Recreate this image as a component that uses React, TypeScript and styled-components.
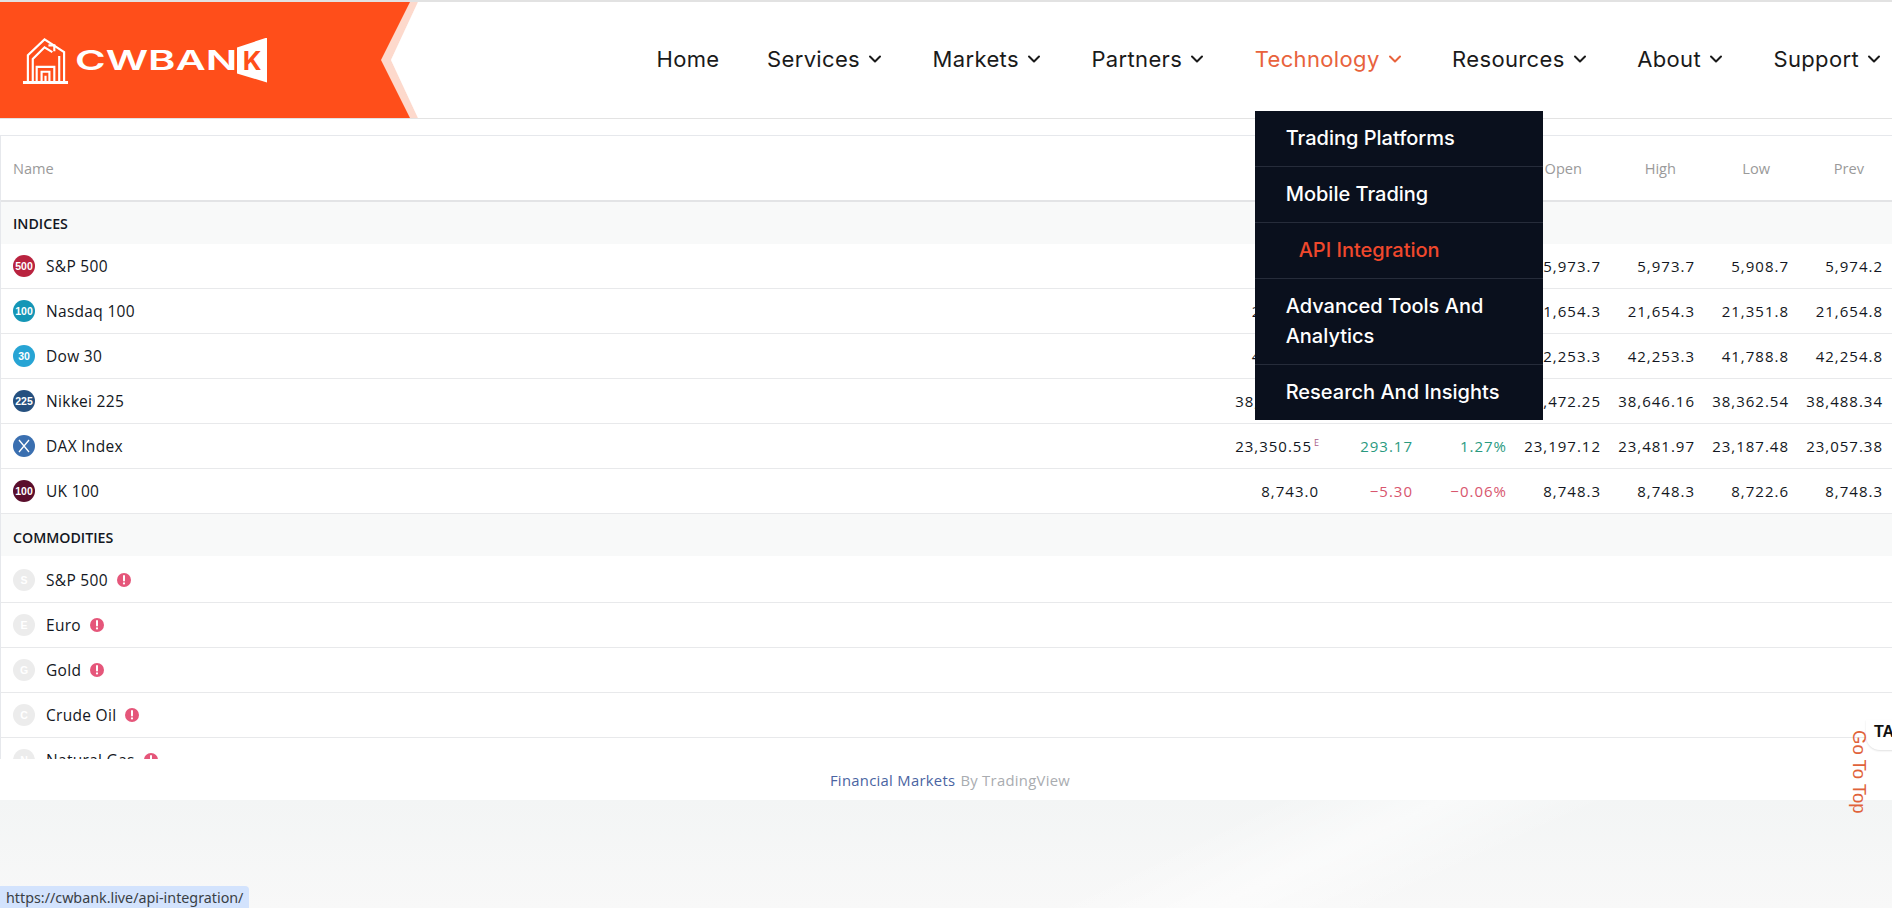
import React from 'react';
import styled, { createGlobalStyle } from 'styled-components';
import { ChevronDown } from 'lucide-react';

const GlobalStyle = createGlobalStyle`
	* {
		box-sizing: border-box;
	}
	html, body {
		margin: 0;
		padding: 0;
		background: #fff;
		overflow: hidden;
	}
`;

const Page = styled.div`
	position: relative;
	display: flex;
	flex-direction: column;
	height: 908px;
	overflow: hidden;
	background: #fff;
	font-family: 'Open Sans', 'Noto Sans', sans-serif;
`;

const Header = styled.header`
	display: flex;
	align-items: stretch;
	height: 119px;
	background: #fff;
	border-top: 2px solid #e2e2e2;
	border-bottom: 1px solid #e3e3e3;
`;

const Brand = styled.a`
	position: relative;
	display: flex;
	align-items: center;
	width: 418px;
	padding-left: 22px;
	background: #fdd9cc;
	clip-path: polygon(0 0, 100% 0, 391px 50%, 100% 100%, 0 100%);
	&::before {
		content: '';
		position: absolute;
		inset: 0;
		background: #ff4e1a;
		clip-path: polygon(0 0, 410px 0, 381px 50%, 410px 100%, 0 100%);
	}
	&::after {
		content: '';
		position: absolute;
		inset: 0;
		background: #fff;
		clip-path: polygon(100% 0, 418px 0, 391px 50%, 418px 100%, 100% 100%);
	}
`;

const BrandMark = styled.svg`
	position: relative;
	z-index: 1;
	flex: none;
	width: 47px;
	height: 48px;
	margin-top: 2px;
`;

const BrandWord = styled.span`
	position: relative;
	z-index: 1;
	display: block;
	width: 105px;
	margin-left: 6px;
	font-family: 'Inter', sans-serif;
	font-size: 27px;
	font-weight: 600;
	line-height: 1;
	color: #fff;
	transform: scaleX(1.54);
	transform-origin: left center;
`;

const BrandFlag = styled.span`
	position: relative;
	z-index: 1;
	display: flex;
	align-items: center;
	justify-content: center;
	width: 30px;
	height: 45px;
	margin-left: 57px;
	background: #fff;
	clip-path: polygon(0 22%, 100% 0, 100% 100%, 0 80%);
	font-family: 'Inter', sans-serif;
	font-size: 26px;
	font-weight: 700;
	color: #ff4e1a;
`;

const Nav = styled.nav`
	display: flex;
	align-items: center;
	margin-left: auto;
	padding-right: 8px;
	gap: 47.5px;
`;

const NavItem = styled.a<{ $active?: boolean }>`
	position: relative;
	display: flex;
	align-items: center;
	gap: 5px;
	height: 100%;
	padding-bottom: 2px;
	font-family: 'Inter', sans-serif;
	font-size: 22px;
	letter-spacing: 0.35px;
	color: ${(p) => (p.$active ? '#e8623c' : '#1a1a1a')};
`;

const Dropdown = styled.ul`
	position: absolute;
	top: 109px;
	left: 0;
	z-index: 5;
	width: 288px;
	margin: 0;
	padding: 0;
	list-style: none;
	background: #0a101d;
`;

const DropdownItem = styled.li<{ $current?: boolean }>`
	padding: 12px 20px 13px ${(p) => (p.$current ? '44px' : '31px')};
	border-top: 1px solid #262c3a;
	font-family: 'Inter', sans-serif;
	font-size: 20px;
	font-weight: 500;
	line-height: 30px;
	letter-spacing: 0;
	color: ${(p) => (p.$current ? '#f0482c' : '#fff')};
	&:first-child {
		border-top: 0;
	}
`;

const Market = styled.section`
	height: 624px;
	margin-top: 16px;
	background: #fff;
	border-top: 1px solid #e6e8ec;
	border-left: 1px solid #e6e8ec;
	overflow: hidden;
	color: #131722;
`;

const columns = '1fr repeat(7, 94px)';

const HeadRow = styled.div`
	display: grid;
	grid-template-columns: ${columns};
	align-items: center;
	height: 66px;
	padding-right: 9px;
	border-bottom: 2px solid #e3e4e6;
	font-size: 14.6px;
	color: #9a9a9a;
`;

const HeadCell = styled.span<{ $name?: boolean }>`
	text-align: ${(p) => (p.$name ? 'left' : 'right')};
	padding: ${(p) => (p.$name ? '0 0 0 12px' : '0 19px 0 0')};
`;

const SectionTitle = styled.div<{ $height: number; $gap: number }>`
	display: flex;
	align-items: center;
	height: ${(p) => p.$height}px;
	padding: ${(p) => p.$gap * 2}px 0 0 12px;
	background: #f8f9f9;
	border-bottom: ${(p) => p.$gap}px solid #fff;
	font-size: 14.2px;
	font-weight: 600;
	color: #131722;
`;

const Row = styled.div`
	display: grid;
	grid-template-columns: ${columns};
	align-items: center;
	height: 45px;
	padding-right: 9px;
	border-bottom: 1px solid #e8e9eb;
	font-size: 15.5px;
`;

const NameCell = styled.div`
	display: flex;
	align-items: center;
	padding-left: 12px;
	letter-spacing: 0.3px;
`;

const Badge = styled.span<{ $color: string }>`
	display: flex;
	align-items: center;
	justify-content: center;
	flex: none;
	width: 22px;
	height: 22px;
	margin-right: 11px;
	border-radius: 50%;
	background: ${(p) => p.$color};
	font-family: 'Liberation Sans', sans-serif;
	font-size: 10.5px;
	font-weight: 700;
	letter-spacing: 0;
	color: #fff;
`;

const Alert = styled.svg`
	flex: none;
	width: 14px;
	height: 14px;
	margin-left: 9px;
`;

const Num = styled.span<{ $tone?: 'up' | 'down' }>`
	position: relative;
	font-size: 15px;
	text-align: right;
	letter-spacing: 1px;
	color: ${(p) => (p.$tone === 'up' ? '#2a9a7f' : p.$tone === 'down' ? '#d8566e' : '#131722')};
`;

const Delay = styled.sup`
	margin-left: 2px;
	font-size: 9px;
	line-height: 0;
	letter-spacing: 0;
	color: #a8618a;
`;

const Attribution = styled.footer`
	display: flex;
	justify-content: center;
	align-items: center;
	gap: 5px;
	height: 41px;
	padding-left: 8px;
	background: #fff;
	font-size: 14.8px;
	letter-spacing: 0.3px;
	color: #a9acb0;
`;

const AttributionLink = styled.a`
	color: #4a64a2;
`;

const Backdrop = styled.div`
	flex: 1;
	background:
		linear-gradient(155deg, transparent 60%, rgba(255, 255, 255, 0.5) 68%, transparent 76%),
		linear-gradient(180deg, #f3f5f5 0%, #f8f8f8 100%);
`;

const GoTop = styled.a`
	position: absolute;
	top: 730px;
	left: 1849px;
	writing-mode: vertical-rl;
	font-family: 'Liberation Sans', sans-serif;
	font-size: 18.5px;
	line-height: 20px;
	color: #e0623a;
`;

const ChartLogo = styled.div`
	position: absolute;
	top: 720px;
	left: 1866px;
	width: 60px;
	height: 30px;
	padding: 3px 0 0 8px;
	background: #fff;
	border-radius: 0 0 0 14px;
	box-shadow: 0 1px 2px rgba(0, 0, 0, 0.12);
	font-family: 'Liberation Sans', sans-serif;
	font-size: 16px;
	font-weight: 700;
	color: #111;
`;

const StatusBubble = styled.div`
	position: absolute;
	left: 0;
	bottom: 0;
	height: 22px;
	padding: 0 6px;
	border-radius: 0 4px 0 0;
	background: #d3e3fd;
	font-family: 'Noto Sans', sans-serif;
	font-size: 14.3px;
	line-height: 24px;
	color: #3a3f45;
`;

type Quote = {
	badge: string;
	color: string;
	name: string;
	last: string;
	delayed?: boolean;
	chg: string;
	pct: string;
	open: string;
	high: string;
	low: string;
	prev: string;
};

const indices: Quote[] = [
	{ badge: '500', color: '#b9233f', name: 'S&P 500', last: '5,911.6', chg: '−62.60', pct: '−1.05%', open: '5,973.7', high: '5,973.7', low: '5,908.7', prev: '5,974.2' },
	{ badge: '100', color: '#1496b6', name: 'Nasdaq 100', last: '21,384.3', chg: '−270.50', pct: '−1.25%', open: '21,654.3', high: '21,654.3', low: '21,351.8', prev: '21,654.8' },
	{ badge: '30', color: '#27a4d4', name: 'Dow 30', last: '41,823.3', chg: '−431.50', pct: '−1.02%', open: '42,253.3', high: '42,253.3', low: '41,788.8', prev: '42,254.8' },
	{ badge: '225', color: '#25507f', name: 'Nikkei 225', last: '38,362.54', delayed: true, chg: '−125.80', pct: '−0.33%', open: '38,472.25', high: '38,646.16', low: '38,362.54', prev: '38,488.34' },
	{ badge: 'x', color: '#3a6fb0', name: 'DAX Index', last: '23,350.55', delayed: true, chg: '293.17', pct: '1.27%', open: '23,197.12', high: '23,481.97', low: '23,187.48', prev: '23,057.38' },
	{ badge: '100', color: '#5a0e2c', name: 'UK 100', last: '8,743.0', chg: '−5.30', pct: '−0.06%', open: '8,748.3', high: '8,748.3', low: '8,722.6', prev: '8,748.3' },
];

const commodities = [
	{ letter: 'S', name: 'S&P 500' },
	{ letter: 'E', name: 'Euro' },
	{ letter: 'G', name: 'Gold' },
	{ letter: 'C', name: 'Crude Oil' },
	{ letter: 'N', name: 'Natural Gas' },
];

const navItems = ['Services', 'Markets', 'Partners', 'Technology', 'Resources', 'About', 'Support'];
const menu = ['Trading Platforms', 'Mobile Trading', 'API Integration', 'Advanced Tools And Analytics', 'Research And Insights'];
const heads = ['Last', 'Chg', 'Chg%', 'Open', 'High', 'Low', 'Prev'];

const tone = (value: string) => (value.startsWith('−') ? 'down' : 'up');

export default function App() {
	return (
		<Page>
			<GlobalStyle />
			<Header>
				<Brand>
					<BrandMark viewBox="0 0 48 48" fill="none" stroke="#fff" strokeWidth="2.2">
						<path d="M1 46h46" strokeWidth="3" />
						<path d="M6 45V18L23 2l20 13v30" />
						<path d="M11 45V22L23 10l8 5" />
						<path d="M27 8h6v6" />
						<path d="M38 45V19" />
						<path d="M15 45V30h18v15" />
						<path d="M20 45v-10h8v10" />
						<path d="M24 45v-6" />
					</BrandMark>
					<BrandWord>CWBAN</BrandWord>
					<BrandFlag>K</BrandFlag>
				</Brand>
				<Nav>
					<NavItem>Home</NavItem>
					{navItems.map((item) => (
						<NavItem key={item} $active={item === 'Technology'}>
							{item}
							<ChevronDown size={20} strokeWidth={2.4} />
							{item === 'Technology' && (
								<Dropdown>
									{menu.map((entry) => (
										<DropdownItem key={entry} $current={entry === 'API Integration'}>
											{entry}
										</DropdownItem>
									))}
								</Dropdown>
							)}
						</NavItem>
					))}
				</Nav>
			</Header>
			<Market>
				<HeadRow>
					<HeadCell $name>Name</HeadCell>
					{heads.map((head) => (
						<HeadCell key={head}>{head}</HeadCell>
					))}
				</HeadRow>
				<SectionTitle $height={42} $gap={0}>INDICES</SectionTitle>
				{indices.map((quote) => (
					<Row key={quote.name}>
						<NameCell>
							<Badge $color={quote.color}>
								{quote.badge === 'x' ? (
									<svg width="14" height="14" viewBox="0 0 14 14" stroke="#fff" strokeWidth="1.3">
										<path d="M2 1l10 12M12 1L2 13" />
									</svg>
								) : (
									quote.badge
								)}
							</Badge>
							{quote.name}
						</NameCell>
						<Num>
							{quote.last}
							{quote.delayed && <Delay>E</Delay>}
						</Num>
						<Num $tone={tone(quote.chg)}>{quote.chg}</Num>
						<Num $tone={tone(quote.pct)}>{quote.pct}</Num>
						<Num>{quote.open}</Num>
						<Num>{quote.high}</Num>
						<Num>{quote.low}</Num>
						<Num>{quote.prev}</Num>
					</Row>
				))}
				<SectionTitle $height={44} $gap={2}>COMMODITIES</SectionTitle>
				{commodities.map((item) => (
					<Row key={item.name}>
						<NameCell>
							<Badge $color="#ececec">{item.letter}</Badge>
							{item.name}
							<Alert viewBox="0 0 14 14">
								<circle cx="7" cy="7" r="7" fill="#e5567a" />
								<path d="M7 3v4.6" stroke="#fff" strokeWidth="2" strokeLinecap="round" />
								<circle cx="7" cy="10.4" r="1.1" fill="#fff" />
							</Alert>
						</NameCell>
					</Row>
				))}
			</Market>
			<Attribution>
				<AttributionLink>Financial Markets</AttributionLink> By TradingView
			</Attribution>
			<Backdrop />
			<ChartLogo>TA</ChartLogo>
			<GoTop>Go To Top</GoTop>
			<StatusBubble>https://cwbank.live/api-integration/</StatusBubble>
		</Page>
	);
}
